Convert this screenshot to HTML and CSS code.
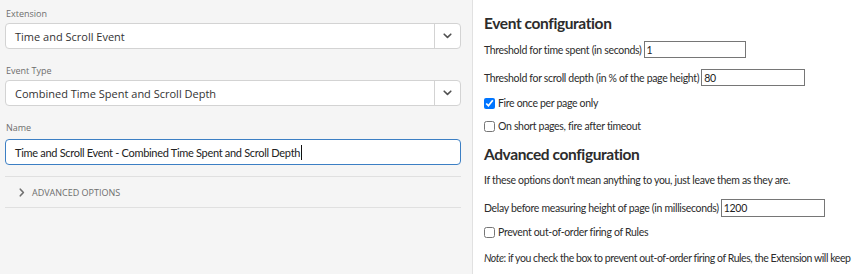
FILE: index.html
```html
<!DOCTYPE html>
<html lang="en">
<head>
  <meta charset="UTF-8" />
  <meta name="viewport" content="width=device-width, initial-scale=1.0" />
  <title>Time and Scroll Event</title>
  <link rel="stylesheet" href="styles.css">
</head>
<body>
  <div class="editor">
    <div class="painel-esquerdo">
      <label class="campo-label">Extension</label>
      <div class="seletor">
        <span class="seletor-valor">Time and Scroll Event</span>
        <span class="seletor-botao">
          <svg width="9" height="6" viewBox="0 0 9 6"><path d="M1.2 1.2 L4.5 4.4 L7.8 1.2" fill="none" stroke="#505050" stroke-width="1.6" stroke-linecap="round" stroke-linejoin="round"/></svg>
        </span>
      </div>

      <label class="campo-label">Event Type</label>
      <div class="seletor">
        <span class="seletor-valor">Combined Time Spent and Scroll Depth</span>
        <span class="seletor-botao">
          <svg width="9" height="6" viewBox="0 0 9 6"><path d="M1.2 1.2 L4.5 4.4 L7.8 1.2" fill="none" stroke="#505050" stroke-width="1.6" stroke-linecap="round" stroke-linejoin="round"/></svg>
        </span>
      </div>

      <label class="campo-label">Name</label>
      <div class="campo-nome">
        <span>Time and Scroll Event - Combined Time Spent and Scroll Depth</span><span class="cursor"></span>
      </div>

      <div class="avancado">
        <svg width="6" height="9" viewBox="0 0 6 9"><path d="M1.3 1.2 L4.4 4.5 L1.3 7.8" fill="none" stroke="#707070" stroke-width="1.6" stroke-linecap="round" stroke-linejoin="round"/></svg>
        <span>ADVANCED OPTIONS</span>
      </div>
    </div>

    <div class="painel-direito">
      <h2 class="titulo">Event configuration</h2>
      <div class="linha linha-1">
        <label>Threshold for time spent (in seconds)</label>
        <input type="text" class="caixa" value="1">
      </div>
      <div class="linha linha-2">
        <label>Threshold for scroll depth (in % of the page height)</label>
        <input type="text" class="caixa" value="80">
      </div>
      <div class="linha-check check-1">
        <input type="checkbox" checked>
        <span>Fire once per page only</span>
      </div>
      <div class="linha-check check-2">
        <input type="checkbox">
        <span>On short pages, fire after timeout</span>
      </div>

      <h2 class="titulo titulo-2">Advanced configuration</h2>
      <p class="texto">If these options don't mean anything to you, just leave them as they are.</p>
      <div class="linha linha-3">
        <label>Delay before measuring height of page (in milliseconds)</label>
        <input type="text" class="caixa" value="1200">
      </div>
      <div class="linha-check check-3">
        <input type="checkbox">
        <span>Prevent out-of-order firing of Rules</span>
      </div>
      <p class="texto nota"><em>Note</em>: if you check the box to prevent out-of-order firing of Rules, the Extension will keep</p>
    </div>
  </div>
</body>
</html>
```

FILE: styles.css
```css
* {
  box-sizing: border-box;
}

body {
  margin: 0;
  font-family: 'Lato', 'Open Sans', sans-serif;
  color: #2c2c2c;
  background: #fff;
  overflow: hidden;
}

.editor {
  display: flex;
  height: 274px;
}

.painel-esquerdo {
  width: 473px;
  flex-shrink: 0;
  background: #f5f5f5;
  border-right: 1px solid #e1e1e1;
  padding: 7px 11px 0 5px;
  display: flex;
  flex-direction: column;
}

.campo-label {
  display: block;
  font-family: 'Open Sans', sans-serif;
  font-size: 9px;
  line-height: 14px;
  color: #6e6e6e;
  padding-left: 1px;
  margin-bottom: 2px;
}

.seletor {
  display: flex;
  height: 26px;
  background: #fff;
  border: 1px solid #d3d3d3;
  border-radius: 4px;
  margin-bottom: 15px;
}

.seletor-valor {
  flex: 1;
  display: flex;
  align-items: center;
  padding-left: 9px;
  font-family: 'Open Sans', sans-serif;
  font-size: 11px;
  color: #333;
}

.seletor-botao {
  width: 26px;
  border-left: 1px solid #d3d3d3;
  display: flex;
  align-items: center;
  justify-content: center;
}

.campo-nome {
  display: flex;
  align-items: center;
  height: 26px;
  background: #fff;
  border: 1px solid #3c7fc4;
  border-radius: 4px;
  padding-left: 9px;
  font-size: 11px;
  letter-spacing: -0.3px;
  color: #222;
  margin-top: 2px;
}

.cursor {
  width: 1px;
  height: 15px;
  margin-left: 1px;
  background: #111;
}

.avancado {
  margin-top: 11px;
  height: 32px;
  border-top: 1px solid #e0e0e0;
  border-bottom: 1px solid #e0e0e0;
  display: flex;
  align-items: center;
  padding-left: 14px;
  gap: 7px;
  font-family: 'Open Sans', sans-serif;
  font-size: 9px;
  color: #6e6e6e;
}

.painel-direito {
  flex: 1;
  padding: 12px 0 0 11px;
  white-space: nowrap;
  overflow: hidden;
  font-size: 10.5px;
  letter-spacing: -0.32px;
}

.titulo {
  margin: 0;
  font-size: 15.5px;
  line-height: 22px;
  font-weight: 700;
  letter-spacing: -0.4px;
  color: #2c2c2c;
}

.linha {
  display: flex;
  align-items: center;
  height: 17px;
}

.linha label {
  margin-right: 2px;
}

.caixa {
  height: 17px;
  width: 104px;
  border: 1px solid #767676;
  border-radius: 0;
  padding: 0 2px;
  font-family: 'Lato', sans-serif;
  font-size: 10.5px;
  letter-spacing: -0.3px;
  color: #222;
  outline: none;
}

.linha-1 .caixa { width: 102px; }

.linha-1 { margin-top: 7px; }
.linha-2 { margin-top: 11px; }
.linha-3 { margin-top: 12px; height: 18px; }
.linha-3 .caixa { height: 18px; }

.linha-check {
  display: flex;
  align-items: center;
  height: 14px;
  margin-top: 10px;
}

.check-2 { margin-top: 9px; }

.linha-check input {
  width: 11px;
  height: 11px;
  margin: 0 3px 0 0;
  accent-color: #0075ff;
}

.check-3 { margin-top: 8px; }

.titulo-2 { margin-top: 10px; }

.texto {
  margin: 8px 0 0;
  line-height: 14px;
}

.nota {
  margin-top: 12px;
  letter-spacing: -0.44px;
}
```
